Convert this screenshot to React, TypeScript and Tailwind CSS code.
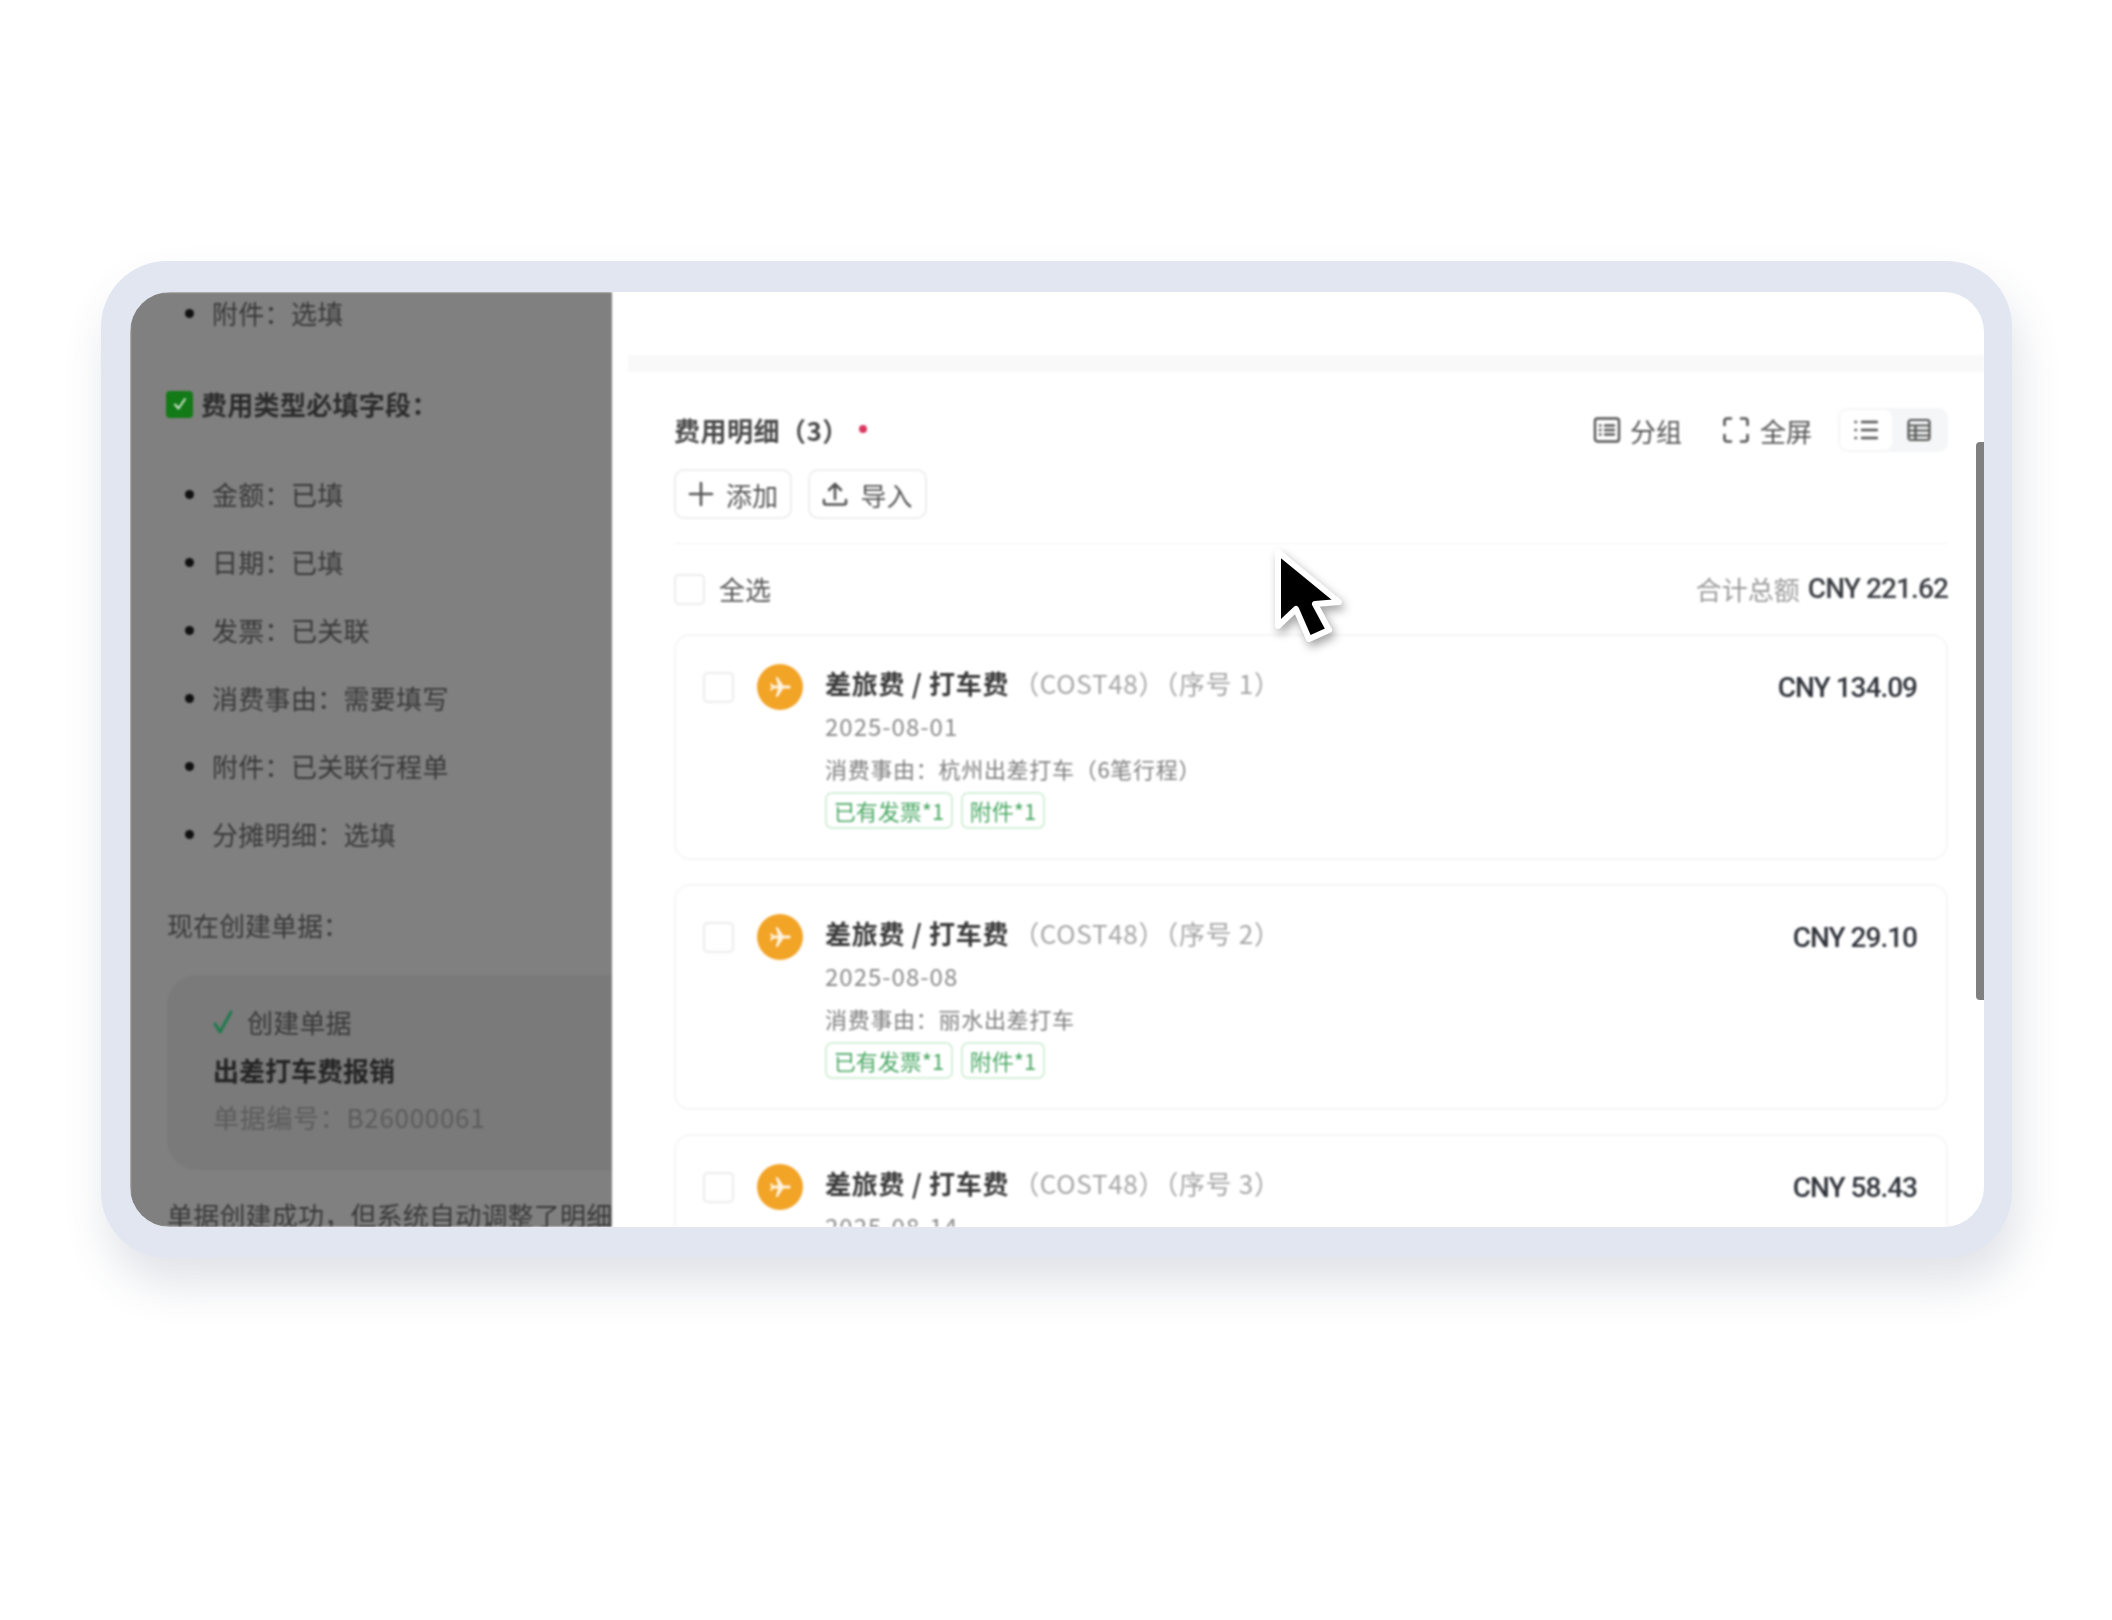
import React from 'react';

const sans = "font-['Noto_Sans_CJK_SC','Noto_Sans',sans-serif]";

const requiredFields = [
  '金额：已填',
  '日期：已填',
  '发票：已关联',
  '消费事由：需要填写',
  '附件：已关联行程单',
  '分摊明细：选填',
];

const expenses = [
  { seq: 1, date: '2025-08-01', reason: '消费事由：杭州出差打车（6笔行程）', amount: 'CNY 134.09' },
  { seq: 2, date: '2025-08-08', reason: '消费事由：丽水出差打车', amount: 'CNY 29.10' },
  { seq: 3, date: '2025-08-14', reason: '', amount: 'CNY 58.43' },
];

function Bullet({ text }: { text: string }) {
  return (
    <div className="flex h-9 items-center pl-[55px]">
      <span className="h-[9px] w-[9px] shrink-0 rounded-full bg-[#111111]" />
      <span className="ml-[18px] text-[26px] leading-9 tracking-[0.3px] text-[#383838]">{text}</span>
    </div>
  );
}

function Checkbox({ className = '' }: { className?: string }) {
  return <div className={`h-[31px] w-[31px] shrink-0 rounded-[5px] border-2 border-[#ececec] bg-white ${className}`} />;
}

function GroupIcon() {
  return (
    <svg width="28" height="28" viewBox="0 0 28 28" fill="none" stroke="#555555" strokeWidth="2.4" strokeLinecap="round">
      <rect x="2" y="2.500" width="24" height="23" rx="2.500" />
      <path d="M12 9.500h9M12 14h9M12 18.500h9M7 9.500h.5M7 14h.5M7 18.500h.5" />
    </svg>
  );
}

function FullscreenIcon() {
  return (
    <svg width="28" height="28" viewBox="0 0 28 28" fill="none" stroke="#555555" strokeWidth="2.6" strokeLinecap="round" strokeLinejoin="round">
      <path d="M9 2.500H5a2.500 2.500 0 0 0-2.500 2.500v4M19 2.500h4A2.500 2.500 0 0 1 25.500 5v4M9 25.500H5A2.500 2.500 0 0 1 2.500 23v-4M19 25.500h4a2.500 2.500 0 0 0 2.500-2.500v-4" />
    </svg>
  );
}

function ListIcon() {
  return (
    <svg width="24" height="20" viewBox="0 0 24 20" fill="none" stroke="#555555" strokeWidth="2.400" strokeLinecap="round">
      <path d="M8 2h15M8 10h15M8 18h15M1.500 2h.5M1.500 10h.5M1.500 18h.5" />
    </svg>
  );
}

function TableIcon() {
  return (
    <svg width="24" height="24" viewBox="0 0 24 24" fill="none" stroke="#555555" strokeWidth="2.200">
      <rect x="1.500" y="2" width="21" height="20" rx="2.500" />
      <path d="M1.500 7.500h21M1.500 12.500h21M1.500 17.500h21M8.500 7.500V22" />
    </svg>
  );
}

function UploadIcon() {
  return (
    <svg width="26" height="26" viewBox="0 0 26 26" fill="none" stroke="#555555" strokeWidth="2.600" strokeLinecap="round" strokeLinejoin="round">
      <path d="M13 18V3M7 9l6-6 6 6M2 19v2.500a2 2 0 0 0 2 2h18a2 2 0 0 0 2-2V19" />
    </svg>
  );
}

function PlaneIcon() {
  return (
    <svg width="26" height="26" viewBox="0 0 24 24" fill="#fff4e2">
      <path d="M22 12c0-.8-.8-1.400-1.800-1.400H15L10 3H8l2.300 7.600H6L4.200 8.500H2.800L4 12l-1.200 3.500h1.400L6 13.400h4.300L8 21h2l5-7.600h5.200c1 0 1.800-.6 1.800-1.400z" />
    </svg>
  );
}

function ExpenseCard({ seq, date, reason, amount }: (typeof expenses)[number]) {
  return (
    <div className="flex h-[226px] shrink-0 rounded-[16px] border-2 border-[#f6f6f6] bg-white pl-[27px] pr-[29px]">
      <Checkbox className="mt-[36px]" />
      <div className="ml-[23px] mt-[28px] flex h-[46px] w-[46px] shrink-0 items-center justify-center rounded-full bg-[#f2a427]">
        <PlaneIcon />
      </div>
      <div className="ml-[22px] min-w-0 flex-1 pt-[29px]">
        <div className="flex h-9 items-center text-[26px] leading-9 tracking-[0.7px] whitespace-nowrap">
          <span className="font-bold text-[#3b3b3b]">差旅费 / 打车费</span>
          <span className="ml-[4px] text-[#a6a6a6]">（COST48）（序号 {seq}）</span>
        </div>
        <div className="mt-[7px] h-9 text-[24px] leading-9 tracking-[1px] text-[#8c8c8c]">{date}</div>
        {reason && (
          <>
            <div className="mt-[6px] h-9 text-[22px] leading-9 tracking-[0.7px] text-[#808080]">{reason}</div>
            <div className="mt-[6px] flex gap-[8px]">
              <span className="flex h-[37px] w-[128px] items-center justify-center rounded-[7px] border-2 border-[#d5f0d8] text-[22px] text-[#4aa864]">
                已有发票*1
              </span>
              <span className="flex h-[37px] w-[84px] items-center justify-center rounded-[7px] border-2 border-[#d5f0d8] text-[22px] text-[#4aa864]">
                附件*1
              </span>
            </div>
          </>
        )}
      </div>
      <div className="mt-[34px] h-9 font-['Roboto',sans-serif] text-[28px] leading-9 font-medium tracking-[-1px] whitespace-nowrap text-[#30343b]">
        {amount}
      </div>
    </div>
  );
}

export default function App() {
  return (
    <div className={`relative h-[1620px] w-[2112px] overflow-hidden bg-white pl-[101px] pt-[261px] ${sans}`}>
      {/* Device frame */}
      <div className="h-[997px] w-[1911px] rounded-[66px] bg-[#e2e6f1] pb-[31px] pl-[29px] pr-[28px] pt-[31px] shadow-[6px_26px_44px_rgba(70,80,110,0.16)]">
        <div className="relative flex h-full overflow-hidden rounded-[40px] bg-white">
          {/* Dimmed chat panel */}
          <div className="w-[482px] shrink-0 overflow-hidden bg-[#808080] pt-[3px] blur-[1px]">
            <Bullet text="附件：选填" />

            <div className="ml-[36px] mt-[55px] flex h-9 items-center">
              <span className="flex h-[27px] w-[27px] items-center justify-center rounded-[4px] bg-[#127a16]">
                <svg width="18" height="18" viewBox="0 0 18 18" fill="none" stroke="#cfe8cf" strokeWidth="2" strokeLinecap="round" strokeLinejoin="round">
                  <path d="M4 9.500l3.500 4L14 4" />
                </svg>
              </span>
              <span className="ml-[8px] text-[26px] leading-9 font-bold tracking-[0.3px] text-[#2b2b2b]">费用类型必填字段：</span>
            </div>

            <div className="mt-[54px] flex flex-col gap-[32px]">
              {requiredFields.map((field) => (
                <Bullet key={field} text={field} />
              ))}
            </div>

            <div className="ml-[37px] mt-[55px] h-9 text-[26px] leading-9 text-[#383838]">现在创建单据：</div>

            <div className="ml-[37px] mt-[32px] flex h-[195px] w-[500px] flex-col gap-[12px] rounded-[30px] bg-[#7a7a7a] pl-[46px] pt-[29px]">
              <div className="flex h-9 items-center">
                <svg width="20" height="26" viewBox="0 0 20 26" fill="none" stroke="#1f7a4d" strokeWidth="3" strokeLinecap="round" strokeLinejoin="round">
                  <path d="M2 15l5 8L18 3" />
                </svg>
                <span className="ml-[14px] text-[26px] leading-9 tracking-[0.2px] text-[#383838]">创建单据</span>
              </div>
              <div className="h-9 text-[26px] leading-9 font-bold text-[#242424]">出差打车费报销</div>
              <div className="-mt-[1px] h-9 text-[26px] leading-9 tracking-[0.7px] text-[#5c5c5c]">单据编号：B26000061</div>
            </div>

            <div className="ml-[37px] mt-[27px] h-9 text-[26px] leading-9 tracking-[0.2px] whitespace-nowrap text-[#383838]">
              单据创建成功，但系统自动调整了明细
            </div>
          </div>

          {/* Expense detail panel */}
          <div className="flex min-w-0 flex-1 flex-col overflow-hidden pl-[62px] pr-[36px] blur-[1px]">
            <div className="-ml-[46px] -mr-[36px] mt-[63px] h-[17px] shrink-0 bg-[#f9f9f9]" />

            <div className="mt-[36px] flex h-[44px] shrink-0 items-center">
              <span className="-mt-[2px] text-[26px] font-semibold tracking-[0.5px] text-[#4a4a4a]">费用明细（3）</span>
              <span className="ml-[10px] -mt-[2px] h-[8px] w-[8px] rounded-full bg-[#d9375f]" />
              <div className="ml-auto flex items-center text-[26px] text-[#555555]">
                <GroupIcon />
                <span className="ml-[9px]">分组</span>
                <span className="ml-[40px]" />
                <FullscreenIcon />
                <span className="ml-[10px]">全屏</span>
                <div className="ml-[26px] flex h-[44px] w-[110px] items-center rounded-[10px] bg-[#f5f6f7] p-[2px]">
                  <div className="flex h-full w-[52px] items-center justify-center rounded-[8px] bg-white">
                    <ListIcon />
                  </div>
                  <div className="flex flex-1 items-center justify-center">
                    <TableIcon />
                  </div>
                </div>
              </div>
            </div>

            <div className="mt-[17px] flex shrink-0 gap-[16px]">
              <button className="flex h-[50px] w-[118px] items-center justify-center gap-[12px] rounded-[10px] border-2 border-[#eeeeee] text-[26px] text-[#555555]">
                <svg width="26" height="26" viewBox="0 0 26 26" fill="none" stroke="#555555" strokeWidth="2.600" strokeLinecap="round">
                  <path d="M13 2v22M2 13h22" />
                </svg>
                添加
              </button>
              <button className="flex h-[50px] w-[119px] items-center justify-center gap-[12px] rounded-[10px] border-2 border-[#eeeeee] text-[26px] text-[#555555]">
                <UploadIcon />
                导入
              </button>
            </div>

            <div className="mt-[24px] h-px shrink-0 bg-[#f4f4f4]" />

            <div className="mt-[30px] flex h-[30px] shrink-0 items-center">
              <Checkbox />
              <span className="ml-[14px] -mt-[2px] text-[26px] text-[#555555]">全选</span>
              <span className="ml-auto -mt-[2px] text-[26px] text-[#9a9a9a]">合计总额</span>
              <span className="ml-[8px] font-['Roboto',sans-serif] text-[28px] font-medium tracking-[-0.9px] text-[#3a3d42]">CNY 221.62</span>
            </div>

            <div className="mt-[30px] flex flex-col gap-[24px]">
              {expenses.map((expense) => (
                <ExpenseCard key={expense.seq} {...expense} />
              ))}
            </div>
          </div>

          {/* Scrollbar thumb */}
          <div className="absolute right-0 top-[150px] h-[558px] w-[8px] rounded-l-[4px] bg-[#808080]" />
        </div>
      </div>

      {/* Mouse pointer */}
      <svg className="absolute left-[1267px] top-[542px] drop-shadow-[3px_5px_5px_rgba(0,0,0,0.35)]" width="76" height="104" viewBox="0 0 76 104">
        <path d="M11 10 L11 84 L29 67 L42 97 L62 88 L48 62 L72 60 Z" fill="#000000" stroke="#ffffff" strokeWidth="6" strokeLinejoin="round" />
      </svg>
    </div>
  );
}
